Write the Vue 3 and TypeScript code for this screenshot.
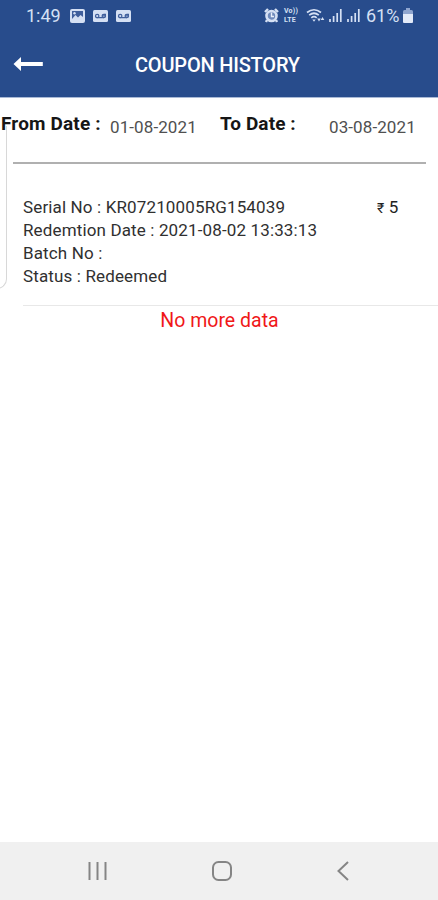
<script setup lang="ts">
interface Coupon {
  serial: string
  redeemedAt: string
  batch: string
  status: string
  amount: number
}

const coupons: Coupon[] = [
  { serial: 'KR07210005RG154039', redeemedAt: '2021-08-02 13:33:13', batch: '', status: 'Redeemed', amount: 5 },
]
const fromDate = '01-08-2021'
const toDate = '03-08-2021'
</script>

<template>
  <div class="screen">
    <header class="top">
      <div class="status">
        <span class="clock">1:49</span>
        <svg class="picture" width="15" height="14" viewBox="0 0 15 14">
          <rect width="15" height="14" rx="2" fill="#d5e0f4" />
          <path d="M2 2h11v6l-2.500-2L8 8.500 5.500 6 2 10z" fill="#405f9c" />
          <circle cx="4.500" cy="4.300" r="1.200" fill="#d5e0f4" />
        </svg>
        <svg v-for="n in 2" :key="n" class="voicemail" width="15" height="12" viewBox="0 0 15 12">
          <rect width="15" height="12" rx="1.500" fill="#d5e0f4" />
          <g fill="none" stroke="#405f9c" stroke-width="1.200">
            <circle cx="4.200" cy="6" r="1.700" /><circle cx="10.800" cy="6" r="1.700" />
            <path d="M4 7.700h7M11 4.300h2M9 5.800h4" />
          </g>
        </svg>
        <span class="spacer"></span>
        <svg class="alarm" width="15" height="15" viewBox="0 0 15 15">
          <circle cx="7.500" cy="8" r="5" fill="#6f8abb" stroke="#d5e0f4" stroke-width="2.600" />
          <path d="M1 4l3-3M14 4l-3-3M3 12l-1 2M12 12l1 2" stroke="#d5e0f4" stroke-width="2.400" />
          <path d="M7.500 4.500V8.500H10" fill="none" stroke="#e8eefa" stroke-width="1.400" />
        </svg>
        <span class="volte"><span>Vo))</span><span>LTE</span></span>
        <svg class="wifi" width="19" height="16" viewBox="0 0 19 16" fill="none" stroke="#d5e0f4">
          <path d="M1 4.500Q8 -1 15 4.500M3.200 7.200Q8 3.300 12.800 7.200M5.300 9.800Q8 7.600 10.700 9.800" stroke-width="1.700" />
          <path d="M6.300 11.500h3.400L8 13.700z" fill="#d5e0f4" stroke="none" />
          <path d="M11.200 10.500h3.600L13 13.500zM14.700 12h3.600l-1.800-3z" fill="#d5e0f4" stroke="none" />
        </svg>
        <svg v-for="n in 2" :key="'s' + n" class="signal" width="13" height="13" viewBox="0 0 13 13">
          <path d="M1 13v-3M4.600 13V7M8.200 13V4M11.800 13V0" stroke="#d5e0f4" stroke-width="1.700" />
        </svg>
        <span class="percent">61%</span>
        <svg class="battery" width="10" height="15" viewBox="0 0 10 15">
          <rect x="3" width="4" height="3" fill="#8fa5cf" />
          <rect y="2" width="10" height="13" rx="1.500" fill="#8fa5cf" />
          <path d="M0 6h10v7.500Q10 15 8.500 15h-7Q0 15 0 13.500z" fill="#e3eaf8" />
        </svg>
      </div>
      <div class="bar">
        <svg class="back" width="30" height="14" viewBox="0 0 30 14">
          <path d="M.5 7L8 0v4.900h21.800v4H8V14z" fill="#fff" />
        </svg>
        <h1>COUPON HISTORY</h1>
      </div>
    </header>

    <main>
      <section class="filters">
        <b class="from-label">From Date :</b>
        <span class="from-value">{{ fromDate }}</span>
        <b class="to-label">To Date :</b>
        <span class="to-value">{{ toDate }}</span>
        <i class="panel-edge"></i>
      </section>
      <ul>
        <li v-for="c in coupons" :key="c.serial">
          <div class="details">
            <p>Serial No : {{ c.serial }}</p>
            <p>Redemtion Date : {{ c.redeemedAt }}</p>
            <p>Batch No : {{ c.batch }}</p>
            <p>Status : {{ c.status }}</p>
          </div>
          <div class="amount"><span class="rupee">₹</span> {{ c.amount }}</div>
        </li>
      </ul>
      <p class="end">No more data</p>
    </main>

    <nav>
      <svg width="19" height="20" viewBox="0 0 19 20"><path d="M1.500 1v18M9.500 1v18M17.500 1v18" stroke="#858585" stroke-width="2" /></svg>
      <svg width="20" height="20" viewBox="0 0 20 20"><rect x="1" y="1" width="18" height="18" rx="5.500" fill="none" stroke="#858585" stroke-width="2" /></svg>
      <svg width="12" height="20" viewBox="0 0 12 20"><path d="M11 1L1.500 10l9.500 9" fill="none" stroke="#858585" stroke-width="2" /></svg>
    </nav>
  </div>
</template>

<style>
body {
  margin: 0;
}
</style>

<style scoped>
.screen {
  display: flex;
  flex-direction: column;
  width: 438px;
  height: 900px;
  overflow: hidden;
  background: #fff;
  color: #303030;
  font-family: Roboto, 'Liberation Sans', sans-serif;
}
svg {
  display: block;
  flex: none;
}
p, h1, ul {
  margin: 0;
  padding: 0;
}
.top {
  box-sizing: border-box;
  height: 98px;
  background: #284c8c;
  border-bottom: 1px solid #a9b9d6;
}
.status {
  display: flex;
  align-items: center;
  height: 31px;
  padding: 0 25px 0 26px;
  color: #d5e0f4;
}
.clock {
  width: 44px;
  font-size: 18px;
}
.voicemail {
  margin-left: 8px;
}
.spacer {
  flex: 1;
}
.volte {
  display: flex;
  flex-direction: column;
  gap: 1px;
  width: 16px;
  margin: 0 6px 0 5px;
  font-size: 7px;
  font-weight: 700;
  letter-spacing: 0.2px;
  line-height: 8px;
}
.signal {
  margin-left: 5px;
}
.wifi + .signal {
  margin-left: 4px;
}
.percent {
  width: 33px;
  margin: 0 4px 0 6px;
  font-size: 18px;
  white-space: nowrap;
}
.bar {
  display: flex;
  align-items: center;
  height: 67px;
  padding-left: 13px;
}
.back {
  margin: 0 92px 1px 0;
}
h1 {
  color: #fff;
  font-size: 20px;
  font-weight: 500;
  letter-spacing: -0.2px;
  white-space: nowrap;
}
main {
  flex: 1;
}
.filters {
  position: relative;
  display: flex;
  height: 64px;
  margin: 0 12px 0 13px;
  border-bottom: 2px solid #b0b0b0;
  line-height: 24px;
  white-space: nowrap;
}
.filters b {
  padding-top: 14px;
  color: #161616;
  font-size: 19px;
  letter-spacing: 0.1px;
}
.filters span {
  padding-top: 17px;
  color: #505050;
  font-size: 17px;
  letter-spacing: 0.1px;
}
.filters .from-label {
  width: 109px;
  margin-left: -12px;
  letter-spacing: 0.15px;
}
.from-value {
  width: 110px;
}
.to-label {
  width: 109px;
}
.panel-edge {
  position: absolute;
  top: 28px;
  left: -23px;
  width: 16px;
  height: 162px;
  border: solid #d8d8d8;
  border-width: 0 1px 1px 0;
  border-radius: 0 0 10px;
}
ul {
  list-style: none;
}
li {
  display: flex;
  height: 109px;
  margin-left: 23px;
  padding-top: 32px;
  border-bottom: 1px solid #e8e8e8;
  font-size: 17px;
  line-height: 23px;
  letter-spacing: 0.14px;
  white-space: nowrap;
}
.details {
  width: 354px;
}
.amount {
  color: #222;
}
.rupee {
  font-size: 14px;
}
.end {
  padding: 3px 0 0 1px;
  color: #f01818;
  font-size: 19.500px;
  line-height: 24px;
  text-align: center;
}
nav {
  display: flex;
  align-items: center;
  justify-content: space-between;
  height: 58px;
  padding: 0 89px 0 88px;
  background: #f0f0f0;
}
</style>
